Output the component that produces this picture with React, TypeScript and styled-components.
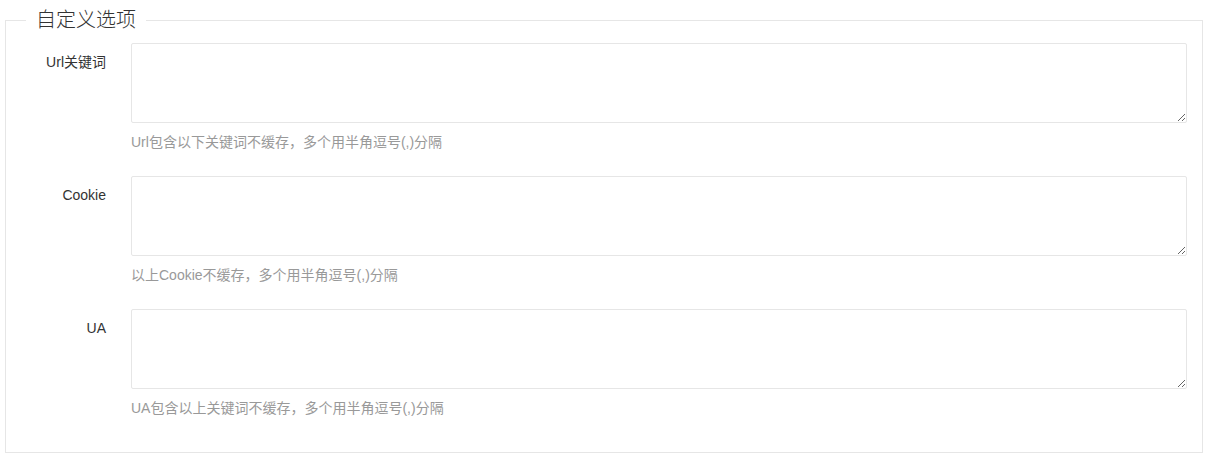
import React from "react";
import styled, { createGlobalStyle } from "styled-components";

const Global = createGlobalStyle`
  html, body {
    margin: 0;
    padding: 0;
    background: #fff;
  }
  body {
    font-family: "Liberation Sans", Arial, "Noto Sans CJK SC", sans-serif;
    font-size: 14px;
    color: #333;
  }
  * { box-sizing: border-box; }
`;

const Fieldset = styled.fieldset`
  margin: 8px 5px 0;
  padding: 11px 15px 10px 0;
  border: 1px solid #e6e6e6;
  min-inline-size: 0;
`;

const Legend = styled.legend`
  margin-left: 20px;
  padding: 0 10px;
  font-size: 20px;
  line-height: 24px;
  font-weight: 300;
  color: #333;
  font-family: "Liberation Sans", "Noto Sans CJK SC", sans-serif;
`;

const Item = styled.div`
  display: grid;
  grid-template-columns: 100px 1fr;
  column-gap: 25px;
  margin-bottom: 15px;
`;

const Label = styled.label`
  padding: 9px 0;
  line-height: 20px;
  text-align: right;
  color: #333;
  font-size: 14px;
`;

const Field = styled.div`
  display: flex;
  flex-direction: column;
`;

const TextArea = styled.textarea`
  display: block;
  width: 100%;
  height: 80px;
  min-height: 80px;
  margin: 0;
  padding: 6px 10px;
  border: 1px solid #e6e6e6;
  border-radius: 2px;
  background: #fff;
  font-family: inherit;
  font-size: 14px;
  line-height: 20px;
  color: #333;
  resize: vertical;
  outline: none;
`;

const Help = styled.div`
  padding: 9px 0;
  line-height: 20px;
  font-size: 14px;
  color: #999;
`;

const rows = [
  { label: "Url关键词", help: "Url包含以下关键词不缓存，多个用半角逗号(,)分隔" },
  { label: "Cookie", help: "以上Cookie不缓存，多个用半角逗号(,)分隔" },
  { label: "UA", help: "UA包含以上关键词不缓存，多个用半角逗号(,)分隔" },
];

export default function App() {
  return (
    <>
      <Global />
      <Fieldset>
        <Legend>自定义选项</Legend>
        {rows.map((r) => (
          <Item key={r.label}>
            <Label>{r.label}</Label>
            <Field>
              <TextArea />
              <Help>{r.help}</Help>
            </Field>
          </Item>
        ))}
      </Fieldset>
    </>
  );
}
